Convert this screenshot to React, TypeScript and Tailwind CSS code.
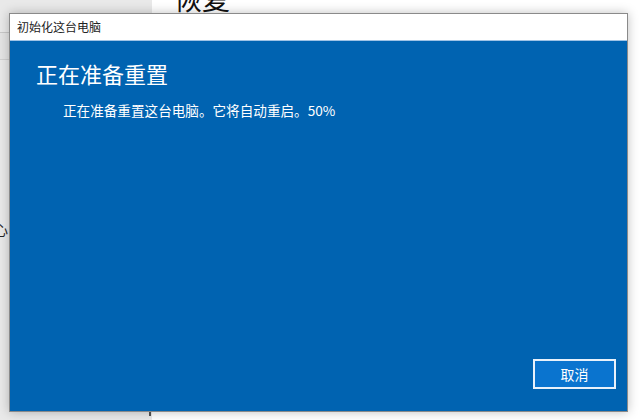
import React from "react";

const font = { fontFamily: '"Noto Sans CJK SC", "Noto Sans", sans-serif' };

export default function App() {
  return (
    <div
      className="relative w-[640px] h-[420px] overflow-hidden bg-white flex"
      style={font}
    >
      {/* background settings window */}
      <div className="w-[152px] h-full bg-[#e9e9e9] flex flex-col">
        <div className="h-[33px] border-b border-[#c8c8c8]" />
        <div className="h-[27px] border-b border-[#d0d0d0] bg-[#e4e4e4]" />
        <div className="flex-1 relative">
          <span className="absolute left-[-6px] top-[162px] text-[14px] leading-none text-[#222]">
            心
          </span>
        </div>
      </div>
      <div className="flex-1 h-full bg-white relative">
        <span className="absolute left-[22px] top-[-16px] text-[28px] leading-[28px] text-[#111]">
          恢复
        </span>
        <div className="absolute left-[-3px] bottom-[4px] w-[2px] h-[4px] bg-[#555]" />
      </div>

      {/* dialog */}
      <div className="absolute left-[9px] top-[13px] w-[619px] h-[399px] border border-[#8a8a8a] shadow-[0_0_10px_rgba(0,0,0,0.25)] flex flex-col">
        <div className="h-[27px] bg-white flex items-center pl-[7px] border-b border-[#9fc3e6]">
          <span className="text-[12px] leading-none text-[#222]">初始化这台电脑</span>
        </div>
        <div className="flex-1 bg-[#0063b1] flex flex-col text-white">
          <div className="pl-[26px] pt-[17px] text-[22px] leading-[30px]">正在准备重置</div>
          <div className="pl-[53px] pt-[12px] text-[13.6px] leading-[20px]">
            正在准备重置这台电脑。它将自动重启。50%
          </div>
          <div className="flex-1" />
          <div className="flex justify-end pr-[11px] pb-[22px]">
            <button className="w-[83px] h-[30px] border-2 border-[#e8f1fb] bg-[#0a74cf] text-white text-[14px] leading-none flex items-center justify-center">
              取消
            </button>
          </div>
        </div>
      </div>
    </div>
  );
}
